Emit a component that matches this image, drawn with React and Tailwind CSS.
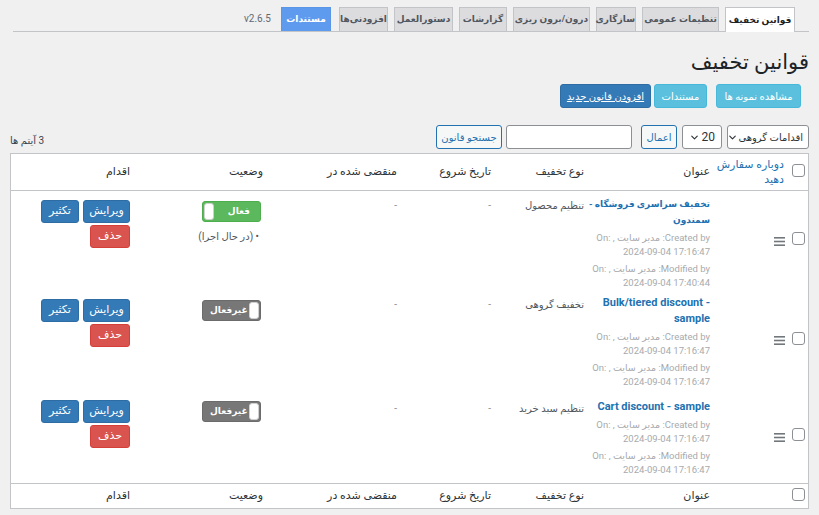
import React from "react";
import { ChevronDown } from "lucide-react";

const font = { fontFamily: 'Roboto, "DejaVu Sans", sans-serif' };

const tabs = [
  ["قوانین تخفیف", "w-[70px]"],
  ["تنظیمات عمومی", "w-[77px]"],
  ["سازگاری", "w-[40px]"],
  ["درون/برون ریزی", "w-[77px]"],
  ["گزارشات", "w-[48px]"],
  ["دستورالعمل", "w-[59px]"],
  ["افزودنی‌ها", "w-[49px]"],
];

const rules = [
  {
    title: ["تخفیف سراسری فروشگاه -", "سمندون"],
    fa: true,
    type: "تنظیم محصول",
    active: true,
    created: "2024-09-04 17:16:47",
    modified: "2024-09-04 17:40:44",
  },
  {
    title: ["Bulk/tiered discount -", "sample"],
    type: "تخفیف گروهی",
    active: false,
    created: "2024-09-04 17:16:47",
    modified: "2024-09-04 17:16:47",
  },
  {
    title: ["Cart discount - sample"],
    type: "تنظیم سبد خرید",
    active: false,
    created: "2024-09-04 17:16:47",
    modified: "2024-09-04 17:16:47",
    last: true,
  },
];

const Checkbox = () => (
  <span className="inline-block w-[13px] h-[13px] rounded-[3px] border border-[#8c8f94] bg-white" />
);

const Handle = () => (
  <svg width="11" height="9" viewBox="0 0 11 9" className="inline-block">
    <rect x="0" y="0" width="11" height="1.6" fill="#72777c" />
    <rect x="0" y="3.7" width="11" height="1.6" fill="#72777c" />
    <rect x="0" y="7.4" width="11" height="1.6" fill="#72777c" />
  </svg>
);

const Toggle = ({ on }) =>
  on ? (
    <div className="w-[59px] h-[21px] rounded-[3px] bg-[#5cb85c] border border-[#4cae4c] flex items-center justify-between pl-[1px] pr-[10px]">
      <span className="text-[9px] font-bold text-white leading-none">فعال</span>
      <span className="shrink-0 w-[10px] h-[17px] rounded-[3px] bg-white border border-[#d0d0d0]" />
    </div>
  ) : (
    <div className="w-[59px] h-[21px] rounded-[3px] bg-[#777] border border-[#6b6b6b] flex flex-row-reverse items-center justify-between pr-[1px] pl-[7px]">
      <span className="text-[9px] font-bold text-white leading-none">غیرفعال</span>
      <span className="shrink-0 w-[10px] h-[17px] rounded-[3px] bg-white border border-[#d0d0d0]" />
    </div>
  );

const Meta = ({ label, date }) => (
  <p className="text-[9.5px] leading-[14px] text-[#a7aaad] mt-[3px]">
    {label}: مدیر سایت , <span dir="ltr">On:</span>
    <br />
    <span dir="ltr">{date}</span>
  </p>
);

export default function App() {
  return (
    <div dir="rtl" style={font} className="w-[819px] min-h-[515px] bg-[#f0f0f1] px-[10px] pt-[8px] text-[#3c434a] whitespace-nowrap">
      {/* tabs */}
      <div className="flex items-end gap-[6px] pr-[14px] border-b border-[#c3c4c7] h-[24px] ml-[3px]">
        {tabs.map(([t, w], i) => (
          <div
            key={t}
            className={
              i === 0
                ? `${w} h-[25px] -mb-px border border-[#c3c4c7] border-b-0 bg-white text-[9px] font-bold leading-[24px] text-center text-[#1d2327]`
                : `${w} h-[24px] border border-[#c3c4c7] border-b-0 bg-[#dcdcde] text-[9px] font-bold leading-[23px] text-center text-[#50575e]`
            }
          >
            {t}
          </div>
        ))}
        <div className="w-[50px] mr-[2px] h-[24px] border border-[#5a95e6] border-b-0 bg-[#5e9bef] text-[9px] font-bold leading-[23px] text-center text-white">
          مستندات
        </div>
        <div className="h-[24px] leading-[24px] text-[10px] text-[#646970] px-[4px]">v2.6.5</div>
      </div>

      {/* heading */}
      <h1 className="mt-[16px] text-[21px] leading-[29px] font-normal text-[#1d2327]">قوانین تخفیف</h1>

      {/* top buttons */}
      <div className="flex mt-[7px] pr-[8px] h-[24px]">
        <button className="w-[85px] h-[24px] rounded-[3px] bg-[#5bc0de] border border-[#46b8da] text-white text-[10px]">
          مشاهده نمونه ها
        </button>
        <button className="w-[53px] h-[24px] mr-[9px] rounded-[3px] bg-[#5bc0de] border border-[#46b8da] text-white text-[10px]">
          مستندات
        </button>
        <button className="w-[91px] h-[24px] mr-[3px] rounded-[3px] bg-[#337ab7] border border-[#2e6da4] text-white text-[10px] underline">
          افزودن قانون جدید
        </button>
      </div>

      {/* toolbar */}
      <div className="flex items-center justify-between mt-[17px] h-[24px]">
        <div className="flex items-center h-[24px]">
          <div className="w-[82px] h-[24px] bg-white border border-[#8c8f94] rounded-[3px] flex items-center justify-between px-[5px] text-[10px] text-[#2c3338]">
            <span>اقدامات گروهی</span>
            <ChevronDown size={11} strokeWidth={2.5} className="shrink-0" />
          </div>
          <div className="w-[40px] h-[24px] mr-[5px] bg-white border border-[#8c8f94] rounded-[3px] flex items-center justify-between px-[6px] text-[12px] text-[#2c3338]">
            <span>20</span>
            <ChevronDown size={11} strokeWidth={2.5} className="shrink-0" />
          </div>
          <button className="w-[36px] h-[24px] mr-[5px] bg-[#f6f7f7] border border-[#2271b1] rounded-[3px] text-[10px] text-[#2271b1]">
            اعمال
          </button>
          <div className="w-[126px] h-[24px] mr-[9px] bg-white border border-[#8c8f94] rounded-[3px]" />
          <button className="w-[66px] h-[24px] mr-[4px] bg-[#f6f7f7] border border-[#2271b1] rounded-[3px] text-[10px] text-[#2271b1]">
            جستجو قانون
          </button>
        </div>
        <span className="text-[10px] text-[#3c434a] mt-[6px]">3 آیتم ها</span>
      </div>

      {/* table */}
      <div className="mt-[4px] bg-white border border-[#c3c4c7]">
        <table className="w-full table-fixed border-collapse text-[11px]">
          <colgroup>
            <col className="w-[20px]" />
            <col className="w-[70px]" />
            <col className="w-[126px]" />
            <col className="w-[93px]" />
            <col className="w-[94px]" />
            <col className="w-[134px]" />
            <col className="w-[133px]" />
            <col />
          </colgroup>
          <thead>
            <tr className="h-[36px] border-b border-[#c3c4c7] text-[#2c3338]">
              <th className="text-center align-middle pt-[2px]"><Checkbox /></th>
              <th className="text-right font-normal pr-[4px] text-[#2271b1] leading-[15px]">
                دوباره سفارش
                <br />
                دهید
              </th>
              <th className="text-right font-normal pr-[8px]">عنوان</th>
              <th className="text-right font-normal pr-[8px]">نوع تخفیف</th>
              <th className="text-right font-normal pr-[8px]">تاریخ شروع</th>
              <th className="text-right font-normal pr-[8px]">منقضی شده در</th>
              <th className="text-right font-normal pr-[8px]">وضعیت</th>
              <th className="text-right font-normal pr-[8px]">اقدام</th>
            </tr>
          </thead>
          <tbody>
            {rules.map((r, i) => (
              <tr key={i} className={r.last ? "h-[93px]" : "h-[100px]"}>
                <td className="text-center align-middle pt-[2px]"><Checkbox /></td>
                <td className="text-right align-middle pr-[3px] pt-[2px]"><Handle /></td>
                <td className={`align-top pr-[8px] ${r.last ? "pt-[9px]" : "pt-[5px]"}`}>
                  <p className={`${r.fa ? "text-[9px]" : "text-[11px]"} font-bold leading-[16px] text-[#2271b1]`}>
                    {r.title.map((l, k) => (
                      <React.Fragment key={k}>
                        {k > 0 && <br />}
                        {r.fa ? l : <span dir="ltr">{l}</span>}
                      </React.Fragment>
                    ))}
                  </p>
                  <Meta label="Created by" date={r.created} />
                  <Meta label="Modified by" date={r.modified} />
                </td>
                <td className={`align-top pr-[8px] ${r.last ? "pt-[11px]" : "pt-[7px]"} text-[10px] text-[#50575e]`}>{r.type}</td>
                <td className={`align-top pr-[8px] ${r.last ? "pt-[11px]" : "pt-[7px]"} text-[10px] text-[#8c8f94]`}>-</td>
                <td className={`align-top pr-[8px] ${r.last ? "pt-[11px]" : "pt-[7px]"} text-[10px] text-[#8c8f94]`}>-</td>
                <td className={`align-top pr-[10px] ${r.last ? "pt-[11px]" : "pt-[10px]"}`}>
                  <Toggle on={r.active} />
                  {r.active && (
                    <p className="mt-[7px] text-[10px] text-[#50575e] pr-[2px]">• (در حال اجرا)</p>
                  )}
                </td>
                <td className={`align-top pr-[8px] ${r.last ? "pt-[10px]" : "pt-[9px]"}`}>
                  <div className="flex gap-[4px]">
                    <button className="w-[47px] h-[23px] rounded-[3px] bg-[#337ab7] border border-[#2e6da4] text-white text-[11px]">
                      ویرایش
                    </button>
                    <button className="w-[38px] h-[23px] rounded-[3px] bg-[#337ab7] border border-[#2e6da4] text-white text-[11px]">
                      تکثیر
                    </button>
                  </div>
                  <button className="mt-[2px] w-[40px] h-[23px] rounded-[3px] bg-[#d9534f] border border-[#d43f3a] text-white text-[11px]">
                    حذف
                  </button>
                </td>
              </tr>
            ))}
          </tbody>
          <tfoot>
            <tr className="h-[25px] border-t border-[#c3c4c7] text-[#2c3338]">
              <td className="text-center align-middle pt-[2px]"><Checkbox /></td>
              <td />
              <td className="text-right pr-[8px]">عنوان</td>
              <td className="text-right pr-[8px]">نوع تخفیف</td>
              <td className="text-right pr-[8px]">تاریخ شروع</td>
              <td className="text-right pr-[8px]">منقضی شده در</td>
              <td className="text-right pr-[8px]">وضعیت</td>
              <td className="text-right pr-[8px]">اقدام</td>
            </tr>
          </tfoot>
        </table>
      </div>
    </div>
  );
}
